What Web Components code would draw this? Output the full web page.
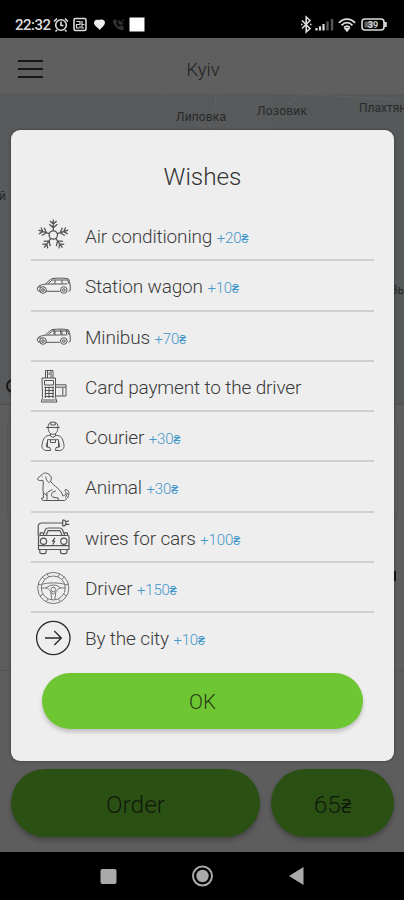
<!DOCTYPE html>
<html lang="en"><head><meta charset="utf-8"><title>Wishes</title>
<style>html,body{margin:0;height:900px;overflow:hidden;background:#000}body{font-family:Roboto,"Noto Sans",sans-serif;font-weight:300}</style>
</head><body><taxi-app></taxi-app>
<script>
const define=(name,html)=>{
  const t=document.createElement('template');t.innerHTML=html;
  customElements.define(name,class extends HTMLElement{
    constructor(){super();this.attachShadow({mode:'open'}).append(t.content.cloneNode(true));}
  });
};
define('status-bar',`<style>
:host{display:flex;box-sizing:border-box;height:38px;padding:10px 16px 0 15px;background:#000;color:#ddd;justify-content:space-between;align-items:flex-start}
.time{font:500 15px/30px Roboto,sans-serif;letter-spacing:-.5px;width:38px;height:30px;white-space:nowrap}
div{display:flex}svg{display:block;height:30px}</style>
<div><span class="time">22:32</span>
<svg width="94" height="30" viewBox="53 10 94 30" fill="none" stroke="#ddd" stroke-width="1.6">
<circle cx="61" cy="25" r="5.3"/><path d="M61 21.5V25.5H63.5M54 21.5L57 18.5M68 21.5L65 18.5M57 30L55.5 31.5M65 30L66.5 31.5"/>
<rect x="74" y="18.5" width="12" height="12" rx="1.5"/><path d="M76.5 21.5H80V24.5H76.5V28H79M82 21V28H84M80 26V28.5M82 24.5H84.5" stroke-width="1.2"/>
<path d="M94 23C94 20 96.5 19 99.3 20C102 19 105 20 105 22.5C104.8 25.5 101.5 27.8 99.5 30C99 28 94 26 94 23Z" fill="#eee" stroke="none"/>
<path d="M113.5 20.5C113 25 118.5 30.5 123 29.5L123.5 27L120.5 25.7L119 27.2C117.5 26.3 116.4 25 115.7 23.5L117 22L115.5 19.5ZM119 20V24H123.5M119.5 23.5L124 19.5" fill="#303030" stroke="#343434" stroke-width="1"/>
<rect x="129.5" y="17.5" width="15" height="14" fill="#fff" stroke="none"/></svg></div>
<svg width="88" height="30" viewBox="300 10 88 30" fill="none" stroke="#ddd" stroke-width="1.6">
<path d="M302 20.5L310 28.5L306.2 32V17L310 20.5L302 28.5M301 24.5H302.5M310 24.5H311.5"/>
<path d="M316.5 30.5V28M320 30.5V26.2M323.5 30.5V24" stroke-width="2.2"/><path d="M327.5 30.5V21.5M332 30.5V19" stroke="#555" stroke-width="2.4"/>
<path d="M339 22.8C343.5 17.8 350.5 17.8 355 22.8M341.6 25.3C344.8 21.8 349.2 21.8 352.4 25.3M344 27.7C346 25.8 348 25.8 350 27.7" stroke-width="1.8"/><path d="M345.3 28.8L347 31L348.7 28.8Z" fill="#ddd"/>
<rect x="362" y="19" width="22" height="11" rx="3"/><path d="M385.5 22V27" stroke-width="2.5"/><rect x="364.5" y="21.5" width="9" height="6" fill="#666" stroke="none"/>
<text x="373" y="27.8" text-anchor="middle" font-family="Roboto,sans-serif" font-weight="700" font-size="9" fill="#ccc" stroke="none">39</text></svg>`);
define('app-header',`<style>:host{display:grid;grid-template-columns:60px 1fr 60px;align-items:center;height:56px;background:#5f5f5f;color:#202020;font-size:18.5px;text-align:center}
.menu{display:grid;gap:6px;width:25px;margin-left:18px;padding-top:5px}.menu i{height:2px;background:#161616}span{padding:7px 0 0 2px}</style>
<div class="menu"><i></i><i></i><i></i></div><span><slot></slot></span>`);
define('map-view',`<style>:host{display:block;height:310px;background:#57595a}svg{display:block}text{font:400 12px Roboto,sans-serif;fill:#292a2b}</style>
<svg width="404" height="310" viewBox="0 94 404 310"><path d="M270 94H404V404H300Z" fill="#55595a"/>
<path d="M160 94L180 112L210 130M216 94L215 107L230 130M288 105L300 94L404 100" fill="none" stroke="#5e6061" stroke-width="1.2"/>
<text x="176" y="121" textLength="50">Липовка</text><text x="257" y="115" textLength="50">Лозовик</text><text x="359" y="112">Плахтянка</text>
<text x="-8" y="200">ий</text><text x="390" y="294">Вы</text></svg>`);
define('order-panel',`<style>:host{display:flex;flex-direction:column;justify-content:flex-end;box-sizing:border-box;height:448px;background:#5d5d5d;padding:0 10px 15px 11px;position:relative}
.field{height:100px;box-sizing:border-box;margin:0 -4px;border:1px solid #555;border-radius:4px}
.rule{height:1px;background:#535353;margin:150px -10px 98px -11px}.actions{display:grid;grid-template-columns:249px 123px;gap:11px}
.top{position:absolute;left:0;right:0;top:0;height:1px;background:#4e4f50}.pin{position:absolute;left:6px;top:-25px;width:14px;height:14px;border:2px solid #181818;border-radius:50%;box-sizing:border-box}
.edge{position:absolute;left:393px;top:167px;width:3px;height:10px;background:#151515}
</style><div class="top"></div><div class="pin"></div><div class="edge"></div><div class="field"></div><div class="rule"></div><div class="actions"><slot></slot></div>`);
define('pill-button',`<style>:host{display:grid;place-items:center;box-sizing:border-box;height:68px;border-radius:34px;background:#2b5014;color:#101a0a;font-size:24.5px;box-shadow:0 3px 5px #0004;padding-top:2px}
:host([bright]){height:56px;border-radius:28px;background:#6fc633;color:#263d16;font-size:20.5px;box-shadow:0 3px 4px #0003}::slotted(small){font-size:19px;font-weight:400}</style><span><slot></slot></span>`);
define('nav-bar',`<style>:host{display:block;height:48px;background:#000}svg{display:block}</style>
<svg width="404" height="48" viewBox="0 852 404 48"><rect x="100.5" y="869" width="16" height="15" rx="2" fill="#aaa"/><circle cx="202.5" cy="876" r="9.5" fill="none" stroke="#aaa" stroke-width="2"/><circle cx="202.5" cy="876" r="6.2" fill="#aaa"/><path d="M303.5 867V885L289 876Z" fill="#aaa"/></svg>`);
define('wish-dialog',`<style>:host{display:flex;flex-direction:column;box-sizing:border-box;width:383px;height:631px;background:#eee;border-radius:9px;padding:0 20px;box-shadow:0 0 3px #0006}
h1{margin:0;height:81px;font-weight:300;font-size:24.3px;line-height:94px;text-align:center;color:#333}
.ok{margin:10px 11px 0}</style>
<h1><slot name="title"></slot></h1><div><slot></slot></div><div class="ok"><slot name="action"></slot></div>`);

const arm='<path d="M20 15.8V4.4M16.7 6L20 9L23.3 6M16 9.2L20 12.8L24 9.2"/>';
const van=split=>`<path d="M8.2 25.3C5 25.4 4 24.4 4.4 21.8C5 19.8 8 18.8 12.4 18.1C15 15.6 17 13.5 19 12.7C24 11.8 32 12 35.5 12.9C36.8 15.7 37.6 20 37.2 24.1Q37 25.3 35.5 25.3M12.7 25.3H26.8M12.5 18.1L34.5 17.9M15.3 17.5L19.2 14H34.8L35.8 17.5M22 14V18M29 14V18M5 21H8"/><circle cx="10" cy="24" r="3.3"/><circle cx="10" cy="24" r="1.3"/><circle cx="30.8" cy="24" r="3.3"/><circle cx="30.8" cy="24" r="1.3"/>`+(split?'<path d="M21 12.5V17M27.7 12.5V17M33.5 12.5V17"/>':'');
const icons={
snow:`<g transform="translate(.3 -1)" stroke-width="1.3">${[0,72,144,216,288].map(a=>`<g transform="rotate(${a} 20 20)">${arm}</g>`).join('')}<circle cx="20" cy="20" r="4.2"/></g>`,
wagon:van(false),minibus:van(true),
terminal:`<path d="M12.5 11V3.5H20V11M14.5 3.5V11M18 3.5V11M16.2 5.3V8M9 11H22.5V30.5L24 35H8.3L9.5 30.5ZM11.5 13.5H20.5V18H11.5ZM22.5 17.8H33V29H23M23 20.2H33M29.8 21V28.5"/><path d="M11.5 20.5H21M11.5 23.5H21M11.5 26.5H21M11.5 29.5H21M12.5 19.5V31M16 19.5V31M20 19.5V31"/><path d="M10 33H22.5"/>`,
courier:`<path d="M15 10.5C14.8 6.7 17 5 20 5C23.3 5 25.2 7 25 10.5M13 10.5H26.5M17.8 5.5V8H22.2V5.5M15.2 11C15.2 15 17.3 17.3 20 17.3S24.8 15 24.8 11M17.5 16.8V19L20 20.5L22.5 19V16.8M17 18.2C12 18.7 10.3 21 9.3 26.5C8.2 31 10 33.5 14 33.5H17.5L17 30.5L13.5 30C13 28.4 13.6 26.5 14.5 24.7M23 18.2C28 18.7 29.7 21 30.7 26.5C31.8 31 30 33.5 26 33.5H22.5L23 30.5L26.5 30C27 28.4 26.4 26.5 25.5 24.7M14.5 30V22.7H25.5V30M17.5 22.7V25.5H22.5V22.7"/>`,
dog:`<path d="M4.7 11.3L9 7.7C10.2 5.5 14.5 5.5 17 8.2C19 9.8 18.6 13.8 16.7 15.3C14.6 15.6 12.6 12.4 13 9.5M4.7 11.3C4 13 6 14 9.8 13.3C11.3 16.6 9 21 10.4 25.8V31H8.8C8.2 32.4 9 33.5 10.8 33.5H31.3C35.5 32 37.5 25.2 34.3 23C32.2 21.8 31.3 23 32.5 24.5C33.8 27 32 28.7 29.7 28.8C28.8 22.8 20.4 18.8 17.7 14.5M14 25V33M15 25L19.5 22.5M22.8 24C17 25.3 18.2 29.4 20 30.2L25.2 31V33.5M11 25.8L14 29M9 9.7H9.5M32.5 30.7L34.5 26"/>`,
charge:`<g transform="translate(0 -.8)" stroke-width="1.2"><path d="M5.2 18.5V9.5Q5.2 5.8 9 5.8H29.5M29.7 2.7V8.7C34 8.7 34 2.7 29.7 2.7M33 4.4L36 3.5M33 7L36.3 7.2M10.2 18.3L12.5 12.2Q13.3 10.8 15.3 10.8H26.6Q28.5 10.8 29.4 12.3L31.8 18.3M13 18.3L15 13.5H27L29.2 18.3M7 18.3H34.8Q36 18.3 36 20V32.3H5.5V20Q5.5 18.3 7 18.3M5.5 28.5H36M6.8 32.5V35Q6.8 36.4 8.4 36.4H11.3Q13.2 36.4 13.2 34.8V32.5M27.5 32.5V35Q27.5 36.4 29.2 36.4H32.2Q34 36.4 34 34.8V32.5M10.5 15.7H7.2V18M31 15.7H34.5V18"/><circle cx="10.5" cy="24" r="3.1"/><circle cx="30.8" cy="24" r="3.1"/><path d="M22 20.7L19.5 24H21.7L19.7 27.4"/></g>`,
wheel:`<g stroke="#777"><circle cx="20.3" cy="20" r="15.6"/><circle cx="20.3" cy="20" r="12"/><circle cx="20.3" cy="21.5" r="2.3"/><path d="M9 16.2C15 14.4 25.6 14.4 31.6 16.2M8.3 20H12.5C15 20 16.6 22 17.8 24L18.8 31.8M32.3 20H28C25.5 20 24 22 22.8 24L21.8 31.8M12.5 20L17.7 17.2H23L28 20M17.8 24L20.3 26.2L22.8 24M9 8.7L12 11.5M31.6 8.7L28.6 11.5M7 28L10 26M33.6 28L30.6 26M14 5.8L15.7 9M26.6 5.8L24.9 9M5 16L8.5 17M35.6 16L32 17M13 34L15 31M27.6 34L25.6 31"/></g>`,
arrow:`<g stroke="#2a2a2a" stroke-width="1.3"><circle cx="20.3" cy="20" r="16.7"/><path d="M12 20H28.3M21.3 13L28.3 20L21.3 27"/></g>`};
customElements.define('wish-icon',class extends HTMLElement{
  constructor(){super();this.attachShadow({mode:'open'});}
  connectedCallback(){this.shadowRoot.innerHTML=`<style>:host{display:block;width:40px;height:40px}svg{display:block}</style><svg width="40" height="40" viewBox="0 0 40 40" fill="none" stroke="#555" stroke-width="1" stroke-linejoin="round">${icons[this.getAttribute('name')]}</svg>`;}
});
customElements.define('wish-row',class extends HTMLElement{
  constructor(){super();this.attachShadow({mode:'open'});}
  connectedCallback(){
    this.shadowRoot.innerHTML=`<style>:host{display:grid;grid-template-columns:40px 1fr;column-gap:12px;box-sizing:border-box;height:50.25px;padding-left:2px;align-items:center;border-bottom:2px solid #cfcfcf;font-size:19px;letter-spacing:-.15px;color:#3b3b3b}
wish-icon{margin-top:2px}
:host(:last-of-type){border-color:transparent}.label{white-space:nowrap;padding-top:3px}b{font-weight:300;font-size:15px;color:#4397ca}i{font:400 12.5px Roboto,sans-serif}</style>
<wish-icon name="${this.getAttribute('icon')}"></wish-icon><div class="label"><slot></slot> <b></b></div>`;
    const price=this.getAttribute('price');
    const b=this.shadowRoot.querySelector('b');
    if(price)b.innerHTML=price.replace('₴','<i>₴</i>');else b.remove();
  }
});
define('taxi-app',`<style>:host{display:block;position:relative;width:404px;height:900px}order-panel{height:448px}wish-dialog{position:absolute;left:11px;top:130px}</style>
<status-bar></status-bar><app-header>Kyiv</app-header><map-view></map-view>
<order-panel><pill-button>Order</pill-button><pill-button>65<small>₴</small></pill-button></order-panel><nav-bar></nav-bar>
<wish-dialog><span slot="title">Wishes</span>
<wish-row icon="snow" price="+20₴">Air conditioning</wish-row>
<wish-row icon="wagon" price="+10₴">Station wagon</wish-row>
<wish-row icon="minibus" price="+70₴">Minibus</wish-row>
<wish-row icon="terminal">Card payment to the driver</wish-row>
<wish-row icon="courier" price="+30₴">Courier</wish-row>
<wish-row icon="dog" price="+30₴">Animal</wish-row>
<wish-row icon="charge" price="+100₴">wires for cars</wish-row>
<wish-row icon="wheel" price="+150₴">Driver</wish-row>
<wish-row icon="arrow" price="+10₴">By the city</wish-row>
<pill-button slot="action" bright>OK</pill-button></wish-dialog>`);
</script></body></html>
